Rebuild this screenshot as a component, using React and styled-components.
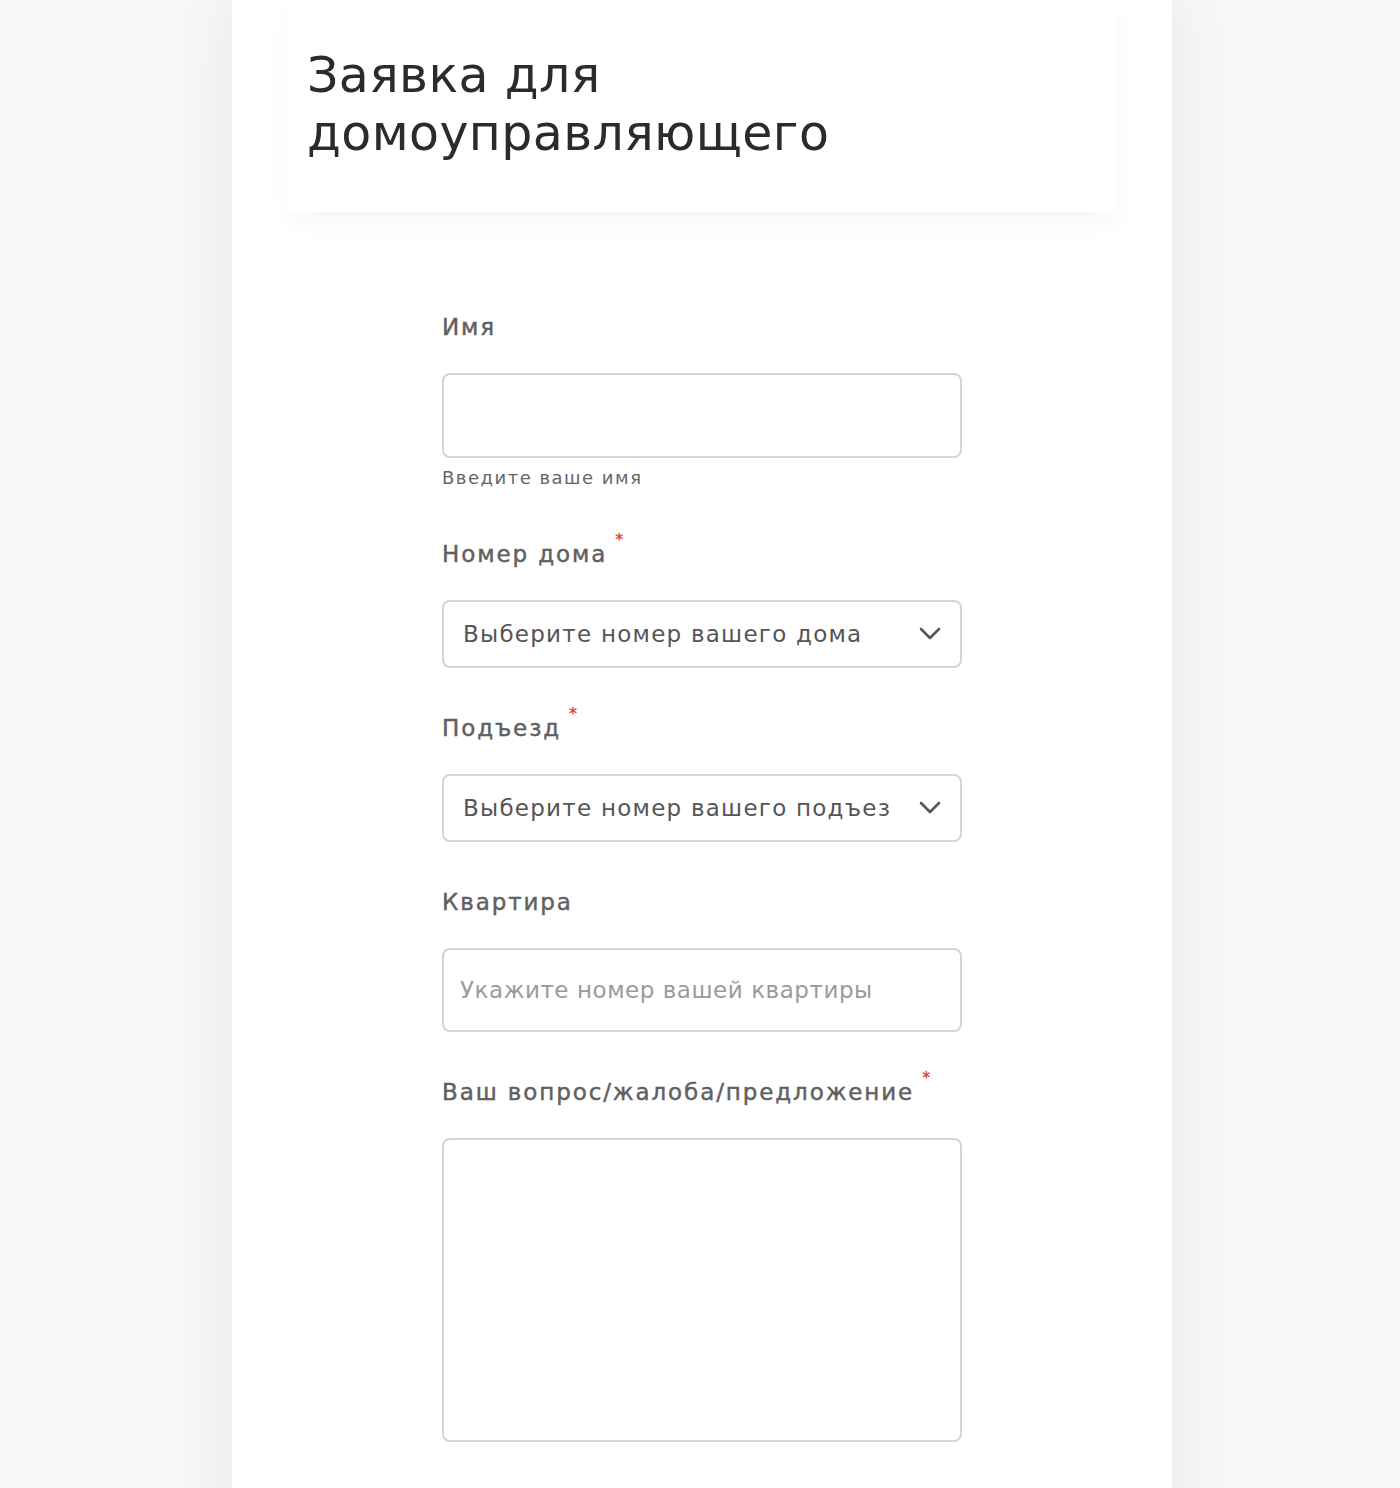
import React from 'react';
import styled, { createGlobalStyle } from 'styled-components';

const GlobalStyle = createGlobalStyle`
  * {
    box-sizing: border-box;
  }
  body {
    margin: 0;
    background: #f7f7f7;
    font-family: "DejaVu Sans", "Noto Sans", sans-serif;
  }
`;

const Page = styled.div`
  width: 940px;
  min-height: 100vh;
  margin: 0 auto;
  padding: 0 56px 80px;
  background: #ffffff;
  box-shadow: 0 0 60px rgba(0, 0, 0, 0.07);
  transform: translateX(2px);
`;

const HeaderCard = styled.header`
  background: #ffffff;
  padding: 47px 19px 49px;
  box-shadow: 0 12px 24px rgba(0, 0, 0, 0.035);
  border-radius: 0 0 8px 8px;
`;

const Title = styled.h1`
  margin: 0;
  max-width: 600px;
  font-size: 49px;
  line-height: 58px;
  font-weight: 400;
  color: #2b2b2b;
  letter-spacing: 0.4px;
`;

const Form = styled.form`
  width: 520px;
  margin: 0 auto;
  padding-top: 101px;
  display: flex;
  flex-direction: column;
`;

const Field = styled.div`
  display: flex;
  flex-direction: column;
  margin-bottom: ${(p) => p.$gap || 46}px;
`;

const Label = styled.label`
  align-self: flex-start;
  position: relative;
  font-size: 23px;
  line-height: 28px;
  font-weight: 400;
  color: #606060;
  letter-spacing: 1.9px;
  -webkit-text-stroke: 0.45px #606060;
  margin-bottom: 32px;
`;

const Required = styled.span`
  position: absolute;
  top: -14px;
  right: -16px;
  font-size: 16px;
  font-weight: 400;
  letter-spacing: 0;
  -webkit-text-stroke: 0.3px #e23b3b;
  color: #e23b3b;
`;

const TextInput = styled.input`
  width: 100%;
  height: ${(p) => p.$height || 84}px;
  border: 2px solid #d4d4d4;
  border-radius: 8px;
  padding: 0 16px;
  font-family: inherit;
  font-size: 23px;
  letter-spacing: 0.55px;
  color: #555555;
  outline: none;
  &::placeholder {
    color: #9a9a9a;
  }
`;

const TextArea = styled.textarea`
  width: 100%;
  height: 304px;
  border: 2px solid #d4d4d4;
  border-radius: 8px;
  padding: 16px;
  font-family: inherit;
  font-size: 23px;
  resize: none;
  outline: none;
`;

const Hint = styled.div`
  margin-top: 9px;
  font-size: 18px;
  line-height: 22px;
  color: #666666;
  letter-spacing: 1.5px;
`;

const SelectBox = styled.div`
  display: flex;
  align-items: center;
  justify-content: space-between;
  height: 68px;
  border: 2px solid #d4d4d4;
  border-radius: 8px;
  padding: 0 19px 0 19px;
  font-size: 23px;
  color: #555555;
  letter-spacing: 1.25px;
  white-space: nowrap;
  overflow: hidden;
`;

/* long options are clipped before the arrow, as a native select does */
const SelectText = styled.span`
  overflow: hidden;
  text-overflow: clip;
  flex: 1;
  margin-right: 28px;
`;

const Chevron = () => (
  <svg width="22" height="14" viewBox="0 0 22 14" fill="none">
    <polyline
      points="2,2 11,11 20,2"
      stroke="#555555"
      strokeWidth="2.6"
      strokeLinecap="round"
      strokeLinejoin="round"
    />
  </svg>
);

const Select = ({ placeholder }) => (
  <SelectBox>
    <SelectText>{placeholder}</SelectText>
    <Chevron />
  </SelectBox>
);

export default function App() {
  return (
    <>
      <GlobalStyle />
      <Page>
        <HeaderCard>
          <Title>Заявка для домоуправляющего</Title>
        </HeaderCard>

        <Form>
          <Field $gap={51}>
            <Label>Имя</Label>
            <TextInput $height={85} />
            <Hint>Введите ваше имя</Hint>
          </Field>

          <Field>
            <Label>
              Номер дома<Required>*</Required>
            </Label>
            <Select placeholder="Выберите номер вашего дома" />
          </Field>

          <Field>
            <Label>
              Подъезд<Required>*</Required>
            </Label>
            <Select placeholder="Выберите номер вашего подъезда" />
          </Field>

          <Field>
            <Label>Квартира</Label>
            <TextInput placeholder="Укажите номер вашей квартиры" />
          </Field>

          <Field>
            <Label>
              Ваш вопрос/жалоба/предложение<Required>*</Required>
            </Label>
            <TextArea />
          </Field>
        </Form>
      </Page>
    </>
  );
}
